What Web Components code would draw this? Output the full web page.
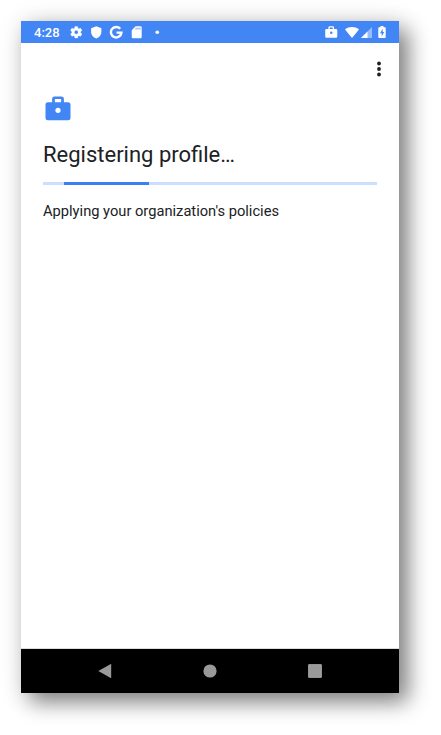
<!DOCTYPE html>
<html lang="en">
<head>
<meta charset="utf-8">
<title>Registering profile</title>
<style>
html,body{margin:0;padding:0;background:#fff}
body{width:441px;height:735px;overflow:hidden;box-sizing:border-box;padding:21px;font-family:Roboto,sans-serif;color:#202124}
</style>
</head>
<body>
<device-screen>
  <status-bar slot="top" time="4:28"></status-bar>
  <setup-page>
    <span slot="title">Registering profile…</span>
    <progress-line slot="progress"></progress-line>
    <span slot="text">Applying your organization's policies</span>
  </setup-page>
  <nav-bar slot="bottom"></nav-bar>
</device-screen>
<script>
const ICONS = {
  gear: ['0 0 24 24', '<path d="M19.14 12.94c.04-.3.06-.61.06-.94s-.02-.64-.07-.94l2.03-1.58a.49.49 0 0 0 .12-.61l-1.92-3.32a.49.49 0 0 0-.59-.22l-2.39.96a7 7 0 0 0-1.62-.94l-.36-2.54a.48.48 0 0 0-.48-.41h-3.84a.47.47 0 0 0-.47.41l-.36 2.54c-.59.24-1.13.57-1.62.94l-2.39-.96a.48.48 0 0 0-.59.22L2.74 8.87a.48.48 0 0 0 .12.61l2.03 1.58a6 6 0 0 0 0 1.88l-2.03 1.58a.49.49 0 0 0-.12.61l1.92 3.32c.12.22.37.29.59.22l2.39-.96c.5.38 1.03.7 1.62.94l.36 2.54c.05.24.24.41.48.41h3.84c.24 0 .44-.17.47-.41l.36-2.54a7 7 0 0 0 1.62-.94l2.39.96c.22.08.47 0 .59-.22l1.92-3.32a.47.47 0 0 0-.12-.61zM12 15.2A3.2 3.2 0 1 1 12 8.8a3.2 3.2 0 0 1 0 6.4z" stroke="currentColor" stroke-width=".5"/>'],
  shield: ['0 0 24 24', '<path d="M12 2L3.500 5.300v5.700c0 5.200 3.600 9.800 8.500 11.200 4.900-1.400 8.500-6 8.500-11.200V5.300z"/>'],
  google: ['0 0 24 24', '<path d="M18.600 6.300A8.700 8.700 0 1 0 20.600 12.600H12.500" fill="none" stroke="currentColor" stroke-width="4"/>'],
  card: ['0 0 24 24', '<path fill-rule="evenodd" d="M19 2h-8L4.500 8.500V20a2 2 0 0 0 2 2H19a2 2 0 0 0 2-2V4a2 2 0 0 0-2-2zM11 4.500h1.400v3H11zM14.200 4.500h1.400v3h-1.400zM17.400 4.500h1.400v3h-1.400z"/>'],
  dot: ['0 0 24 24', '<circle cx="12" cy="12" r="3"/>'],
  work: ['0 0 24 24', '<path fill-rule="evenodd" d="M20 6.500h-3.300V4a2 2 0 0 0-2-2H9.300a2 2 0 0 0-2 2v2.500H4a2 2 0 0 0-2 2v10.500a2 2 0 0 0 2 2h16a2 2 0 0 0 2-2V8.500a2 2 0 0 0-2-2zM14.500 6.500H9.500V4h5zM12 15.100a2.100 2.100 0 1 1 0-4.200a2.100 2.100 0 0 1 0 4.200z"/>'],
  wifi: ['0 0 14 11', '<path d="M0 2.400C4-.8 10-.8 14 2.400L7 11z"/>'],
  cell: ['0 0 11 11', '<path opacity=".45" d="M11 0V11H0z"/><path d="M6.500 4.500V11H0z"/>'],
  battery: ['0 0 8 12', '<path fill-rule="evenodd" d="M2.500 0h3v1.200H7a.7.7 0 0 1 .7.700v9.400a.7.7 0 0 1-.7.700H1a.7.7 0 0 1-.7-.700V1.900a.7.7 0 0 1 .7-.700h1.500zM4.700 2.800L2 7.200h1.700v3.300L6.200 6H4.700z"/>'],
  more: ['0 0 4 16', '<circle cx="2" cy="2.500" r="1.900"/><circle cx="2" cy="8" r="1.900"/><circle cx="2" cy="13.500" r="1.900"/>'],
  back: ['0 0 14 16', '<path d="M13.200.7v14.600L.3 8z"/>'],
  home: ['0 0 14 14', '<circle cx="7" cy="7" r="6.600"/>'],
  recent: ['0 0 14 14', '<rect x=".2" y=".2" width="13.600" height="13.600" rx="1"/><path d="M.7.700h12.600v12.600H.7z" fill="none" stroke="#b4b4b4" stroke-width=".6"/>']
};

class UiIcon extends HTMLElement {
  connectedCallback() {
    const [box, art] = ICONS[this.getAttribute('name')];
    const root = this.attachShadow({mode: 'open'});
    root.innerHTML = `<style>:host{display:block;flex:none}svg{display:block;width:100%;height:100%;fill:currentColor}</style><svg viewBox="${box}" aria-hidden="true">${art}</svg>`;
  }
}

class DeviceScreen extends HTMLElement {
  constructor() {
    super();
    this.attachShadow({mode: 'open'}).innerHTML = `<style>
      :host{display:flex;flex-direction:column;width:378px;height:672px;background:#fff;box-shadow:9px 9px 20px rgba(0,0,0,.46),2px 2px 26px rgba(0,0,0,.12)}
      main{flex:1;min-height:0}
    </style><slot name="top"></slot><main><slot></slot></main><slot name="bottom"></slot>`;
  }
}

class StatusBar extends HTMLElement {
  connectedCallback() {
    this.attachShadow({mode: 'open'}).innerHTML = `<style>
      :host{display:flex;align-items:center;height:22px;background:#4285f4;color:#fff;box-sizing:border-box;padding:0 13px}
      time{width:34.600px;font:500 13px/22px Roboto,sans-serif;padding-top:1px}
      .left,.right{display:flex;align-items:center}
      .left{gap:5.800px}
      .right{margin-left:auto}
      .left ui-icon{width:14.500px;height:14.500px}
      .bag{width:14.500px;height:14.500px;margin-right:6.500px}
      .wifi{width:14px;height:11px;margin-right:2px}
      .cell{width:11px;height:11px;margin-right:6px}
      .battery{width:8px;height:12px}
    </style><time>${this.getAttribute('time')}</time>
    <div class="left"><ui-icon name="gear"></ui-icon><ui-icon name="shield"></ui-icon><ui-icon name="google"></ui-icon><ui-icon name="card"></ui-icon><ui-icon name="dot"></ui-icon></div>
    <div class="right"><ui-icon class="bag" name="work"></ui-icon><ui-icon class="wifi" name="wifi"></ui-icon><ui-icon class="cell" name="cell"></ui-icon><ui-icon class="battery" name="battery"></ui-icon></div>`;
  }
}

class SetupPage extends HTMLElement {
  constructor() {
    super();
    this.attachShadow({mode: 'open'}).innerHTML = `<style>
      :host{display:block;padding:18px 22px 0}
      .menu{display:flex;justify-content:flex-end;margin-right:-4px}
      .menu ui-icon{width:4px;height:16px}
      .bag{width:30px;height:30px;margin-top:17px;color:#4285f4}
      h1{margin:15px 0 0;font:400 22px/32px Roboto,sans-serif}
      .bar{margin-top:11px}
      p{margin:15px 0 0;font:400 14.680px/22px Roboto,sans-serif}
    </style>
    <div class="menu"><ui-icon name="more"></ui-icon></div>
    <ui-icon class="bag" name="work"></ui-icon>
    <h1><slot name="title"></slot></h1>
    <div class="bar"><slot name="progress"></slot></div>
    <p><slot name="text"></slot></p>`;
  }
}

class ProgressLine extends HTMLElement {
  constructor() {
    super();
    this.attachShadow({mode: 'open'}).innerHTML = `<style>
      :host{display:block;height:3px;background:#cddffe;padding-left:21px}
      div{width:85.400px;height:3px;background:#3b80f2}
    </style><div></div>`;
  }
}

class NavBar extends HTMLElement {
  constructor() {
    super();
    this.attachShadow({mode: 'open'}).innerHTML = `<style>
      :host{display:flex;align-items:center;justify-content:space-between;height:45px;box-sizing:border-box;border-top:1px solid #dcdcdc;background:#000;color:#999;padding:0 77.500px 0 77px}
      ui-icon{width:14px;height:14px}
      .back{height:16px}
    </style><ui-icon class="back" name="back"></ui-icon><ui-icon name="home"></ui-icon><ui-icon name="recent"></ui-icon>`;
  }
}

customElements.define('ui-icon', UiIcon);
customElements.define('device-screen', DeviceScreen);
customElements.define('status-bar', StatusBar);
customElements.define('setup-page', SetupPage);
customElements.define('progress-line', ProgressLine);
customElements.define('nav-bar', NavBar);
</script>
</body>
</html>
